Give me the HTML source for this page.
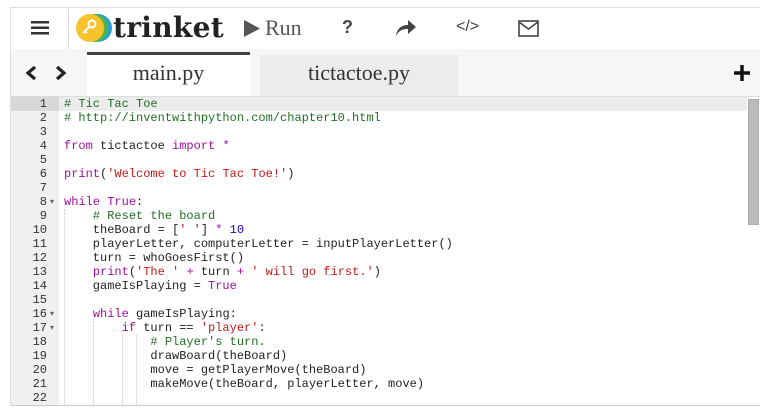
<!DOCTYPE html><html><head><style>
body{margin:0;width:760px;height:419px;background:#fff;overflow:hidden;font-family:"Liberation Sans",sans-serif;position:relative}
.a{position:absolute}
.hdr{left:10px;top:7px;width:750px;height:41px;border-top:1px solid #ddd;border-left:1px solid #ddd;border-bottom:1px solid #ddd;background:#fff}
.tabs{left:10px;top:49px;width:750px;height:47px;background:#f6f6f6;border-left:1px solid #ddd;border-bottom:1px solid #ddd}
.code{left:10px;top:97px;width:750px;height:308px;border-left:1px solid #ddd;border-bottom:1px solid #ccc;background:#fff;font-family:"Liberation Mono",monospace;font-size:12px}
.gut{left:0;top:0;width:48px;height:308px;background:#f0f0f0}
.ln{position:absolute;left:0;width:36px;text-align:right;color:#333;height:14px;line-height:14px}
.cl{position:absolute;left:53px;white-space:pre;height:14px;line-height:14px;color:#222}
.c{color:#236e25}.k{color:#a0109e}.s{color:#c41a16}.n{color:#1c00cf}
.g{position:absolute;border-left:1px dotted #ccc;width:0}
</style></head><body>
<div class="a hdr">
<div class="a" style="left:57px;top:0;width:1px;height:41px;background:#ddd"></div>
<svg class="a" style="left:20px;top:12px" width="18" height="16"><rect y="1" width="18" height="2.5" fill="#333"/><rect y="6.5" width="18" height="2.5" fill="#333"/><rect y="12" width="18" height="2.5" fill="#333"/></svg>
<svg class="a" style="left:64px;top:3px" width="38" height="34"><circle cx="23" cy="17" r="14" fill="#2a9fd8"/><circle cx="19" cy="17" r="14" fill="#4fb848"/><circle cx="15" cy="17" r="14" fill="#f7c22b"/><circle cx="17" cy="13" r="3.5" fill="none" stroke="#fff" stroke-width="2"/><path d="M14.5 15.5 L8 22 M10 20l2 2" stroke="#fff" stroke-width="2"/></svg>
<div class="a" style="left:102px;top:3px;font-family:'DejaVu Serif',serif;font-weight:bold;font-size:28px;color:#222;letter-spacing:0.3px">trinket</div>
<svg class="a" style="left:233px;top:12px" width="16" height="17"><path d="M0 0L16 8.5L0 17Z" fill="#555"/></svg>
<div class="a" style="left:254px;top:7px;font-family:'Liberation Serif',serif;font-size:22px;color:#555">Run</div>
<div class="a" style="left:331px;top:9px;font-size:18px;font-weight:bold;color:#444">?</div>
<svg class="a" style="left:384px;top:11px" width="22" height="18"><path d="M1 17C2 9 7 6 13 6V1l8 7-8 7V10C8 10 4 11 1 17Z" fill="#444"/></svg>
<div class="a" style="left:445px;top:10px;font-size:16px;color:#444">&lt;/&gt;</div>
<svg class="a" style="left:507px;top:12px" width="21" height="17"><rect x="1" y="1" width="19" height="15" fill="none" stroke="#444" stroke-width="1.6"/><path d="M1 2L10.5 9L20 2" fill="none" stroke="#444" stroke-width="1.6"/></svg>
</div>
<div class="a tabs">
<svg class="a" style="left:13px;top:16px" width="14" height="16"><path d="M11 2L4 8L11 14" fill="none" stroke="#222" stroke-width="3.2"/></svg>
<svg class="a" style="left:43px;top:16px" width="14" height="16"><path d="M3 2L10 8L3 14" fill="none" stroke="#222" stroke-width="3.2"/></svg>
<div class="a" style="left:76px;top:3px;width:163px;height:44px;background:#fff;border-top:3px solid #444;box-sizing:border-box"></div>
<div class="a" style="left:76px;top:11px;width:163px;text-align:center;font-family:'Liberation Serif',serif;font-size:22px;color:#333">main.py</div>
<div class="a" style="left:249px;top:6px;width:198px;height:41px;background:#ececec"></div>
<div class="a" style="left:249px;top:11px;width:198px;text-align:center;font-family:'Liberation Serif',serif;font-size:22px;color:#333">tictactoe.py</div>
<svg class="a" style="left:723px;top:16px" width="16" height="16"><path d="M8 0V16M0 8H16" stroke="#111" stroke-width="3.5"/></svg>
</div>
<div class="a code">
<div class="a gut"></div>
<div class="a" style="left:0;top:0;width:48px;height:14px;background:#d8d8d8"></div>
<div class="a" style="left:48px;top:0;width:688px;height:14px;background:#ececec"></div>
<div class="a" style="left:737px;top:2px;width:11px;height:126px;background:#bbb;border:1px solid #aaa;box-sizing:border-box"></div>
<div id="L"></div>
</div>
<script>
var L=[
'<span class="c"># Tic Tac Toe</span>',
'<span class="c"># http://inventwithpython.com/chapter10.html</span>',
'',
'<span class="k">from</span> tictactoe <span class="k">import</span> <span class="k">*</span>',
'',
'<span class="k">print</span>(<span class="s">\'Welcome to Tic Tac Toe!\'</span>)',
'',
'<span class="k">while</span> <span class="k">True</span>:',
'    <span class="c"># Reset the board</span>',
'    theBoard = [<span class="s">\' \'</span>] <span class="k">*</span> <span class="n">10</span>',
'    playerLetter, computerLetter = inputPlayerLetter()',
'    turn = whoGoesFirst()',
'    <span class="k">print</span>(<span class="s">\'The \'</span> <span class="k">+</span> turn <span class="k">+</span> <span class="s">\' will go first.\'</span>)',
'    gameIsPlaying = <span class="k">True</span>',
'',
'    <span class="k">while</span> gameIsPlaying:',
'        <span class="k">if</span> turn == <span class="s">\'player\'</span>:',
'            <span class="c"># Player\'s turn.</span>',
'            drawBoard(theBoard)',
'            move = getPlayerMove(theBoard)',
'            makeMove(theBoard, playerLetter, move)',
''];
var h='';
for(var i=0;i<L.length;i++){var t=i*14;var f=(i==7||i==15||i==16);
h+='<div class="ln" style="top:'+t+'px">'+(i+1)+'</div>'+(f?'<div class="a" style="left:39px;top:'+(t+1)+'px;font-size:8px;color:#666;line-height:14px">&#9662;</div>':'')+'<div class="cl" style="top:'+t+'px">'+L[i]+'</div>';}
h+='<div class="g" style="left:53px;top:112px;height:196px"></div>';
h+='<div class="g" style="left:82px;top:224px;height:84px"></div>';
h+='<div class="g" style="left:111px;top:238px;height:70px"></div>';
h+='<div class="g" style="left:125px;top:238px;height:70px"></div>';
document.getElementById('L').innerHTML=h;
</script>
</body></html>
